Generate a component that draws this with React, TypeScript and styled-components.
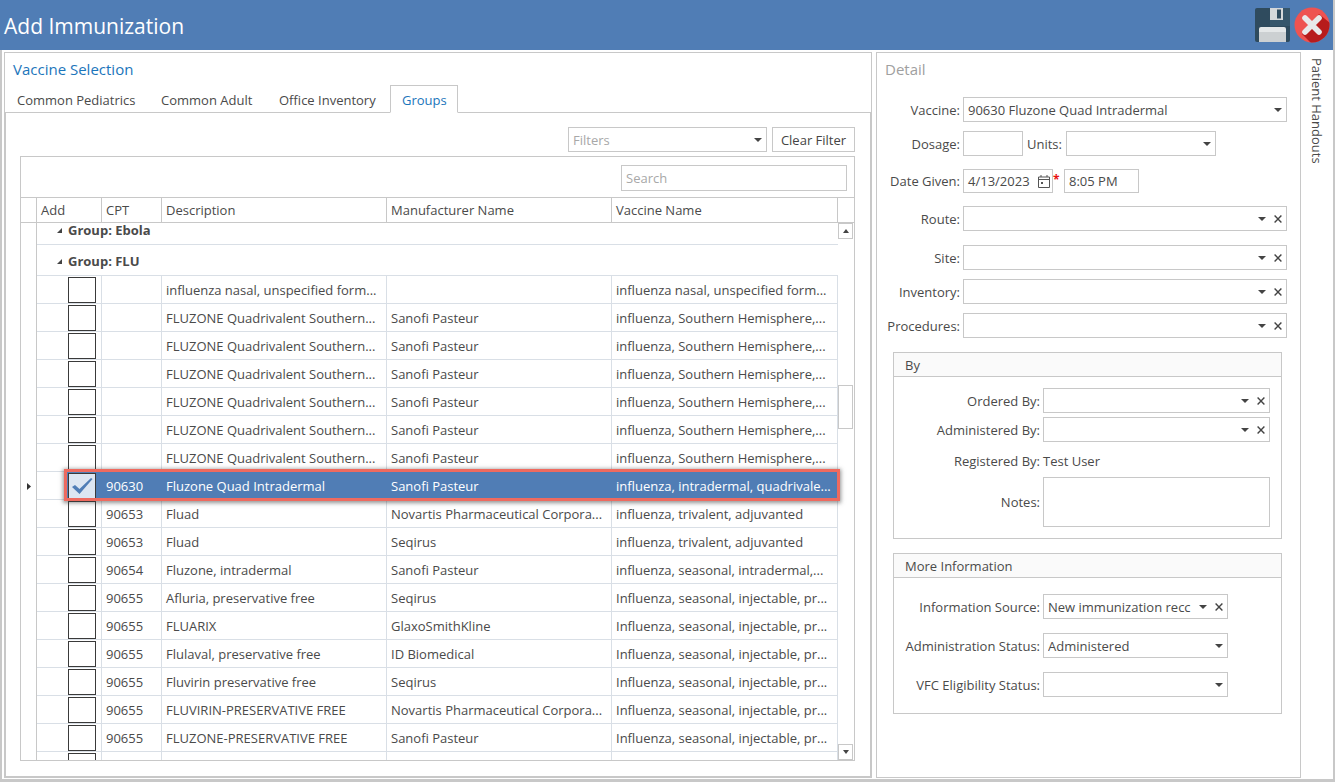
import React from "react";
import styled, { createGlobalStyle } from "styled-components";

const Global = createGlobalStyle`
  html, body { margin: 0; padding: 0; background: #fff; overflow: hidden; }
  body { font-family: "Open Sans", "Noto Sans", sans-serif; font-size: 13px; color: #4a4a4a; }
  * { box-sizing: border-box; }
`;

const Page = styled.div`
  width: 1335px; height: 782px; display: flex; flex-direction: column;
  border-left: 2px solid #c8c8c8; border-right: 2px solid #c8c8c8; border-bottom: 3px solid #c8c8c8;
  background: #fff;
`;
const Header = styled.header`
  height: 50px; margin-left: -2px; background: #507db5; display: flex; align-items: center;
  padding-left: 4px; flex: none;
`;
const Title = styled.h1`
  margin: 0; flex: 1; font-size: 21px; font-weight: 400; color: #fff; line-height: 50px; padding-top: 2px;
`;
const HeaderIcons = styled.div`
  display: flex; align-items: center; gap: 3px; margin-right: 3px; height: 50px;
`;
const Body = styled.div`
  flex: 1; display: flex; padding: 2px 0 1px 2px; min-height: 0;
`;
const LeftPanel = styled.section`
  width: 868px; border: 1px solid #c8c8c8; display: flex; flex-direction: column; margin-right: 4px;
`;
const PanelTitle = styled.div<{ $muted?: boolean }>`
  height: 32px; flex: none; padding-left: 8px; padding-top: 5px; font-size: 15px; line-height: 22px;
  color: ${(p) => (p.$muted ? "#a0a0a0" : "#1b75bb")};
`;
const TabStrip = styled.div`
  height: 28px; flex: none; display: flex; border-bottom: 1px solid #c8c8c8;
`;
const Tab = styled.div<{ $active?: boolean; $w: number }>`
  width: ${(p) => p.$w}px; height: 28px; padding-left: 11px; line-height: 29px; white-space: nowrap;
  color: ${(p) => (p.$active ? "#1b75bb" : "#4a4a4a")};
  ${(p) =>
    p.$active
      ? "border: 1px solid #c8c8c8; border-bottom: 1px solid #fff; background: #fff;"
      : "border: 1px solid transparent;"}
`;
const TabBody = styled.div`
  flex: 1; min-height: 0; border-left: 1px solid #c8c8c8; border-right: 1px solid #c8c8c8; border-bottom: 1px solid #c8c8c8;
  padding: 14px 15px 15px 14px; display: flex; flex-direction: column;
`;
const FilterRow = styled.div`
  height: 25px; flex: none; display: flex; justify-content: flex-end; gap: 5px; margin-bottom: 4px;
`;
const ClearButton = styled.button`
  width: 83px; height: 25px; border: 1px solid #c8c8c8; background: #fff; font: inherit; color: #444; padding: 0; cursor: default;
`;
const Combo = styled.div<{ $w?: number; $h?: number }>`
  width: ${(p) => (p.$w ? `${p.$w}px` : "100%")}; height: ${(p) => p.$h ?? 25}px; flex: ${(p) => (p.$w ? "none" : "1")};
  border: 1px solid #c8c8c8; background: #fff; display: flex; align-items: center; padding: 0 4px 0 4px; gap: 8px; min-width: 0;
`;
const ComboText = styled.div<{ $muted?: boolean }>`
  flex: 1; min-width: 0; overflow: hidden; white-space: nowrap; color: ${(p) => (p.$muted ? "#a8a8a8" : "#4a4a4a")};
`;
const Arrow = styled.i`
  width: 0; height: 0; flex: none; border-left: 4px solid transparent; border-right: 4px solid transparent; border-top: 4px solid #444;
`;
const Grid = styled.div`
  flex: 1; min-height: 0; border: 1px solid #c8c8c8; display: flex; flex-direction: column; overflow: hidden;
`;
const SearchBar = styled.div`
  height: 40px; flex: none; display: flex; justify-content: flex-end; padding: 8px 7px 0 0;
`;
const SearchBox = styled.div`
  width: 226px; height: 26px; border: 1px solid #c8c8c8; color: #a8a8a8; padding-left: 4px; line-height: 24px;
`;
const Columns = "16px 65px 60px 225px 225px 226px";
const HeadRow = styled.div`
  height: 26px; flex: none; display: grid; grid-template-columns: ${Columns} 16px;
  border-top: 1px solid #c8c8c8; border-bottom: 1px solid #c8c8c8;
`;
const HeadCell = styled.div`
  border-right: 1px solid #c8c8c8; padding-left: 4px; line-height: 25px; white-space: nowrap;
  &:last-child { border-right: none; }
`;
const GridMain = styled.div`
  flex: 1; min-height: 0; display: flex;
`;
const RowsArea = styled.div`
  width: 817px; flex: none; position: relative;
`;
const GroupRow = styled.div<{ $h: number }>`
  height: ${(p) => p.$h}px; display: grid; grid-template-columns: 16px 1fr;
`;
const GroupCell = styled.div<{ $short?: boolean }>`
  border-bottom: 1px solid #d9dfe6; display: flex; align-items: center; padding-left: 20px; gap: 6px;
  font-weight: 700; color: #4a4a4a; line-height: 14px; min-height: 0;
  padding-bottom: ${(p) => (p.$short ? 7 : 0)}px; padding-top: ${(p) => (p.$short ? 0 : 2)}px;
`;
const IndicatorCell = styled.div`
  border-right: 1px solid #c8c8c8; display: flex; align-items: center; justify-content: center;
`;
const Row = styled.div<{ $selected?: boolean }>`
  height: 28px; display: grid; grid-template-columns: ${Columns}; position: relative;
  z-index: ${(p) => (p.$selected ? 2 : "auto")};
`;
const Cell = styled.div<{ $selected?: boolean }>`
  padding-left: 4px; line-height: 28px; white-space: nowrap; overflow: hidden;
  border-right: 1px solid ${(p) => (p.$selected ? "#507db5" : "#d9dfe6")};
  border-bottom: 1px solid ${(p) => (p.$selected ? "#507db5" : "#d9dfe6")};
  background: ${(p) => (p.$selected ? "#507db5" : "#fff")};
  color: ${(p) => (p.$selected ? "#fff" : "#4a4a4a")};
`;
const AddCell = styled.div<{ $selected?: boolean }>`
  border-right: 1px solid ${(p) => (p.$selected ? "#507db5" : "#d9dfe6")};
  border-bottom: 1px solid #d9dfe6;
  background: ${(p) => (p.$selected ? "linear-gradient(90deg, #fff 28px, #507db5 28px)" : "#fff")};
  padding: 1px 0 0 31px;
`;
const Check = styled.div<{ $checked?: boolean }>`
  width: 28px; height: 26px; border: 1px solid #3a3a3a; background: ${(p) => (p.$checked ? "#dce6f2" : "#fff")};
  display: flex; align-items: center; justify-content: center;
`;
const Highlight = styled.div`
  position: absolute; left: 43px; right: -2px; top: -3px; bottom: -1px; border: 3px solid #ee6a5f; pointer-events: none;
  box-shadow: 0 1px 4px 1px rgba(60, 60, 60, 0.55);
`;
const ScrollTrack = styled.div`
  width: 16px; flex: none; display: flex; flex-direction: column; position: relative; z-index: 1; background: #fff;
`;
const ScrollButton = styled.div`
  width: 15px; height: 16px; flex: none; border: 1px solid #c8c8c8; display: flex; align-items: center; justify-content: center; background: #fff;
`;
const ScrollUp = styled.i`
  width: 0; height: 0; border-left: 3.5px solid transparent; border-right: 3.5px solid transparent; border-bottom: 4px solid #444;
`;
const ScrollDown = styled.i`
  width: 0; height: 0; border-left: 3.5px solid transparent; border-right: 3.5px solid transparent; border-top: 4px solid #444;
`;
const ScrollThumb = styled.div`
  width: 15px; height: 44px; flex: none; border: 1px solid #c8c8c8; margin-top: 146px; background: #fff;
`;
const ScrollSpacer = styled.div`
  flex: 1;
`;
const DetailPanel = styled.section`
  width: 425px; border: 1px solid #c8c8c8; flex: none;
`;
const FormRow = styled.div<{ $top: number; $inner?: boolean; $h?: number }>`
  display: flex; align-items: center; margin-top: ${(p) => p.$top}px; height: ${(p) => p.$h ?? 25}px;
  width: ${(p) => (p.$inner ? "auto" : "410px")};
`;
const Label = styled.div<{ $w?: number }>`
  width: ${(p) => p.$w ?? 83}px; flex: none; text-align: right; margin-right: 3px; white-space: nowrap;
`;
const InlineLabel = styled.div`
  margin: 0 8px 0 4px; width: 31px; flex: none; white-space: nowrap;
`;
const TextInput = styled.div<{ $w: number; $h?: number }>`
  width: ${(p) => p.$w}px; height: ${(p) => p.$h ?? 25}px; flex: none; border: 1px solid #c8c8c8; padding-left: 4px;
  display: flex; align-items: center; white-space: nowrap;
`;
const DateText = styled.div`
  flex: 1;
`;
const Star = styled.span`
  color: #e81010; font-weight: 700; width: 11px; flex: none; font-size: 12px; line-height: 12px; height: 14px;
`;
const Fieldset = styled.div<{ $top: number; $h: number }>`
  margin: ${(p) => p.$top}px 0 0 16px; width: 389px; height: ${(p) => p.$h}px; border: 1px solid #c8c8c8;
`;
const FieldsetHead = styled.div`
  height: 24px; background: #fafafa; border-bottom: 1px solid #c8c8c8; padding-left: 11px; line-height: 24px;
`;
const StaticValue = styled.div`
  white-space: nowrap;
`;
const Rail = styled.aside`
  flex: 1; padding: 6px 0 0 7px; display: flex; align-items: flex-start;
`;
const RailText = styled.div`
  writing-mode: vertical-rl; white-space: nowrap; color: #4a4a4a;
`;

const SaveIcon = () => (
  <svg width="36" height="36" viewBox="0 0 36 36" aria-hidden="true">
    <rect x="0" y="1" width="35" height="34" rx="2" fill="#2f4b5e" />
    <rect x="15" y="1" width="20" height="18" fill="#36566b" />
    <rect x="15" y="1" width="13" height="12" fill="#d5d8da" />
    <rect x="22" y="2.5" width="4" height="9" fill="#2f4b5e" />
    <rect x="4" y="20" width="27" height="15" rx="2" fill="#e4e7e8" />
    <rect x="4" y="25" width="27" height="10" fill="#ccd0d2" />
  </svg>
);
const CloseIcon = () => (
  <svg width="36" height="36" viewBox="0 0 36 36" aria-hidden="true">
    <defs>
      <clipPath id="closeClip"><circle cx="18" cy="18" r="17.5" /></clipPath>
    </defs>
    <circle cx="18" cy="18" r="17.5" fill="#ee5351" />
    <polygon points="25,7 36,16 36,36 17,36 8,27" fill="#b71c1c" clipPath="url(#closeClip)" />
    <path d="M11 11 L25 25 M25 11 L11 25" stroke="#e8e9ea" strokeWidth="5.6" strokeLinecap="round" />
  </svg>
);
const ClearX = () => (
  <svg width="8" height="8" viewBox="0 0 8 8" style={{ flex: "none" }} aria-hidden="true">
    <path d="M0.6 0.6 L7.4 7.4 M7.4 0.6 L0.6 7.4" stroke="#444" strokeWidth="1.4" />
  </svg>
);
const CalendarIcon = () => (
  <svg width="12" height="13" viewBox="0 0 12 13" style={{ flex: "none", marginRight: 2 }} aria-hidden="true">
    <path d="M0.5 2 H11.5 V12.5 H0.5 Z M0.5 4.5 H11.5 M3 0 V2 M9 0 V2" fill="none" stroke="#555" strokeWidth="1" />
    <rect x="3" y="7" width="2" height="2" fill="#555" />
  </svg>
);
const Collapse = () => (
  <svg width="5" height="5" viewBox="0 0 5 5" style={{ flex: "none" }} aria-hidden="true">
    <polygon points="5,0 5,5 0,5" fill="#444" />
  </svg>
);
const CurrentMark = () => (
  <svg width="4" height="7" viewBox="0 0 4 7" aria-hidden="true">
    <polygon points="0,0 4,3.5 0,7" fill="#333" />
  </svg>
);
const CheckMark = () => (
  <svg width="22" height="18" viewBox="0 0 22 18" aria-hidden="true">
    <path d="M1 10 L4 8 L8.5 12 L20 1 L21.5 2 L8.5 17 Z" fill="#4f7db6" />
  </svg>
);

const SOUTH = ["", "FLUZONE Quadrivalent Southern...", "Sanofi Pasteur", "influenza, Southern Hemisphere,..."];
const INJ = "Influenza, seasonal, injectable, pr...";
const rows: { d: string[]; selected?: boolean }[] = [
  { d: ["", "influenza nasal, unspecified form...", "", "influenza nasal, unspecified form..."] },
  { d: SOUTH }, { d: SOUTH }, { d: SOUTH }, { d: SOUTH }, { d: SOUTH }, { d: SOUTH },
  { d: ["90630", "Fluzone Quad Intradermal", "Sanofi Pasteur", "influenza, intradermal, quadrivale..."], selected: true },
  { d: ["90653", "Fluad", "Novartis Pharmaceutical Corpora...", "influenza, trivalent, adjuvanted"] },
  { d: ["90653", "Fluad", "Seqirus", "influenza, trivalent, adjuvanted"] },
  { d: ["90654", "Fluzone, intradermal", "Sanofi Pasteur", "influenza, seasonal, intradermal,..."] },
  { d: ["90655", "Afluria, preservative free", "Seqirus", INJ] },
  { d: ["90655", "FLUARIX", "GlaxoSmithKline", INJ] },
  { d: ["90655", "Flulaval, preservative free", "ID Biomedical", INJ] },
  { d: ["90655", "Fluvirin preservative free", "Seqirus", INJ] },
  { d: ["90655", "FLUVIRIN-PRESERVATIVE FREE", "Novartis Pharmaceutical Corpora...", INJ] },
  { d: ["90655", "FLUZONE-PRESERVATIVE FREE", "Sanofi Pasteur", INJ] },
  { d: ["", "", "", ""] },
];

const ComboField = ({ text, clear, w, muted }: { text?: string; clear?: boolean; w?: number; muted?: boolean }) => (
  <Combo $w={w}>
    <ComboText $muted={muted}>{text}</ComboText>
    <Arrow />
    {clear && <ClearX />}
  </Combo>
);

export default function App() {
  return (
    <Page>
      <Global />
      <Header>
        <Title>Add Immunization</Title>
        <HeaderIcons>
          <SaveIcon />
          <CloseIcon />
        </HeaderIcons>
      </Header>
      <Body>
        <LeftPanel>
          <PanelTitle>Vaccine Selection</PanelTitle>
          <TabStrip>
            <Tab $w={144}>Common Pediatrics</Tab>
            <Tab $w={118}>Common Adult</Tab>
            <Tab $w={123}>Office Inventory</Tab>
            <Tab $w={68} $active>Groups</Tab>
          </TabStrip>
          <TabBody>
            <FilterRow>
              <ComboField text="Filters" w={199} muted />
              <ClearButton>Clear Filter</ClearButton>
            </FilterRow>
            <Grid>
              <SearchBar>
                <SearchBox>Search</SearchBox>
              </SearchBar>
              <HeadRow>
                <HeadCell />
                <HeadCell>Add</HeadCell>
                <HeadCell>CPT</HeadCell>
                <HeadCell>Description</HeadCell>
                <HeadCell>Manufacturer Name</HeadCell>
                <HeadCell>Vaccine Name</HeadCell>
                <HeadCell />
              </HeadRow>
              <GridMain>
                <RowsArea>
                  <GroupRow $h={22}>
                    <IndicatorCell />
                    <GroupCell $short><Collapse />Group: Ebola</GroupCell>
                  </GroupRow>
                  <GroupRow $h={31}>
                    <IndicatorCell />
                    <GroupCell><Collapse />Group: FLU</GroupCell>
                  </GroupRow>
                  {rows.map((r, i) => (
                    <Row key={i} $selected={r.selected}>
                      <IndicatorCell>{r.selected && <CurrentMark />}</IndicatorCell>
                      <AddCell $selected={r.selected}>
                        <Check $checked={r.selected}>{r.selected && <CheckMark />}</Check>
                      </AddCell>
                      {r.d.map((t, j) => (
                        <Cell key={j} $selected={r.selected}>{t}</Cell>
                      ))}
                      {r.selected && <Highlight />}
                    </Row>
                  ))}
                </RowsArea>
                <ScrollTrack>
                  <ScrollButton><ScrollUp /></ScrollButton>
                  <ScrollThumb />
                  <ScrollSpacer />
                  <ScrollButton><ScrollDown /></ScrollButton>
                </ScrollTrack>
              </GridMain>
            </Grid>
          </TabBody>
        </LeftPanel>
        <DetailPanel>
          <PanelTitle $muted>Detail</PanelTitle>
          <FormRow $top={12}>
            <Label>Vaccine:</Label>
            <ComboField text="90630 Fluzone Quad Intradermal" />
          </FormRow>
          <FormRow $top={9}>
            <Label>Dosage:</Label>
            <TextInput $w={60} />
            <InlineLabel>Units:</InlineLabel>
            <ComboField w={150} />
          </FormRow>
          <FormRow $top={13} $h={24}>
            <Label>Date Given:</Label>
            <TextInput $w={90} $h={24}>
              <DateText>4/13/2023</DateText>
              <CalendarIcon />
            </TextInput>
            <Star>*</Star>
            <TextInput $w={75} $h={24}>8:05 PM</TextInput>
          </FormRow>
          <FormRow $top={13}>
            <Label>Route:</Label>
            <ComboField clear />
          </FormRow>
          <FormRow $top={14}>
            <Label>Site:</Label>
            <ComboField clear />
          </FormRow>
          <FormRow $top={9}>
            <Label>Inventory:</Label>
            <ComboField clear />
          </FormRow>
          <FormRow $top={9}>
            <Label>Procedures:</Label>
            <ComboField clear />
          </FormRow>
          <Fieldset $top={14} $h={187}>
            <FieldsetHead>By</FieldsetHead>
            <FormRow $top={11} $inner>
              <Label $w={146}>Ordered By:</Label>
              <ComboField w={227} clear />
            </FormRow>
            <FormRow $top={4} $inner>
              <Label $w={146}>Administered By:</Label>
              <ComboField w={227} clear />
            </FormRow>
            <FormRow $top={6} $inner>
              <Label $w={146}>Registered By:</Label>
              <StaticValue>Test User</StaticValue>
            </FormRow>
            <FormRow $top={4} $inner $h={50}>
              <Label $w={146}>Notes:</Label>
              <TextInput $w={227} $h={50} />
            </FormRow>
          </Fieldset>
          <Fieldset $top={14} $h={161}>
            <FieldsetHead>More Information</FieldsetHead>
            <FormRow $top={16} $inner>
              <Label $w={146}>Information Source:</Label>
              <ComboField w={185} text="New immunization recc" clear />
            </FormRow>
            <FormRow $top={14} $inner>
              <Label $w={146}>Administration Status:</Label>
              <ComboField w={185} text="Administered" />
            </FormRow>
            <FormRow $top={14} $inner>
              <Label $w={146}>VFC Eligibility Status:</Label>
              <ComboField w={185} />
            </FormRow>
          </Fieldset>
        </DetailPanel>
        <Rail>
          <RailText>Patient Handouts</RailText>
        </Rail>
      </Body>
    </Page>
  );
}
